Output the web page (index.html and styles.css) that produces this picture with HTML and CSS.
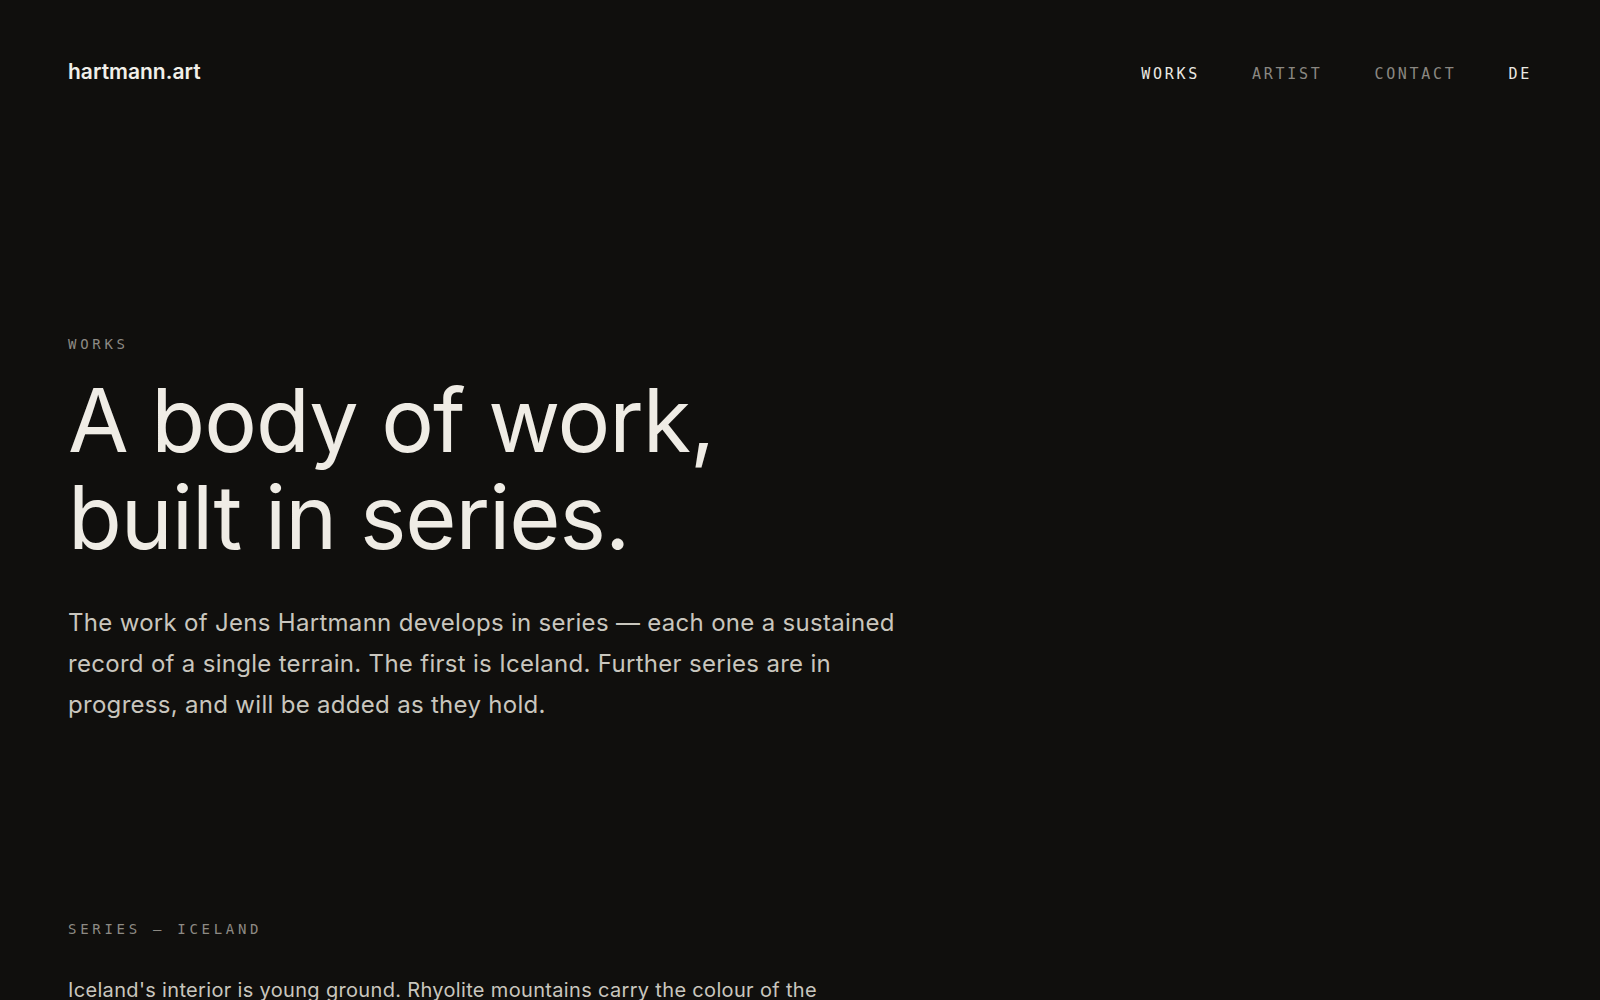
FILE: index.html
```html
<!DOCTYPE html>
<html lang="en">
<head>
<meta charset="utf-8">
<title>Works — hartmann.art</title>
<link rel="stylesheet" href="styles.css">
</head>
<body>
<header class="site-header">
  <a class="logo" href="#">hartmann.art</a>
  <nav class="nav">
    <a class="nav-link is-active" href="#">WORKS</a>
    <a class="nav-link" href="#">ARTIST</a>
    <a class="nav-link" href="#">CONTACT</a>
    <a class="nav-link is-lang" href="#">DE</a>
  </nav>
</header>
<main>
  <section class="hero">
    <p class="eyebrow">WORKS</p>
    <h1 class="hero-title">A body of work,<br>built in series.</h1>
    <p class="hero-lead">The work of Jens Hartmann develops in series — each one a sustained record of a single terrain. The first is Iceland. Further series are in progress, and will be added as they hold.</p>
  </section>
  <section class="series">
    <p class="eyebrow">SERIES — ICELAND</p>
    <p class="series-text">Iceland's interior is young ground. Rhyolite mountains carry the colour of the oxidised minerals in them, lava fields lie where they cooled, and the light changes the land by the hour.</p>
  </section>
</main>
</body>
</html>
```
FILE: styles.css
```css
html, body {
  margin: 0;
  padding: 0;
}
body {
  background: #100f0d;
  color: #eeebe4;
  font-family: Inter, "Noto Sans", sans-serif;
  overflow: hidden;
}
a {
  color: inherit;
  text-decoration: none;
}
.site-header {
  display: flex;
  justify-content: space-between;
  align-items: center;
  height: 142px;
  padding: 0 68px;
}
.logo {
  font-family: Inter, sans-serif;
  font-weight: 600;
  font-size: 21px;
  letter-spacing: 0;
  color: #f1efe9;
}
.nav {
  display: flex;
  gap: 52px;
  padding-top: 6px;
}
.nav-link {
  font-family: "DejaVu Sans Mono", "Liberation Mono", monospace;
  font-size: 15px;
  letter-spacing: 0.18em;
  color: #8a8781;
}
.nav-link.is-active,
.nav-link.is-lang {
  color: #ebe9e3;
}
main {
  padding: 0 68px;
}
.eyebrow {
  margin: 0;
  font-family: "DejaVu Sans Mono", "Liberation Mono", monospace;
  font-size: 14px;
  line-height: 20px;
  letter-spacing: 0.265em;
  color: #8d8a84;
}
.hero {
  padding-top: 192px;
}
.hero-title {
  margin: 18px 0 0;
  font-family: Inter, sans-serif;
  font-weight: 400;
  font-size: 88px;
  line-height: 1.1;
  letter-spacing: -0.012em;
  color: #efece5;
}
.hero-lead {
  margin: 36px 0 0;
  max-width: 850px;
  font-family: Inter, sans-serif;
  font-size: 24px;
  line-height: 41px;
  letter-spacing: 0.3px;
  color: #c9c6be;
}
.series {
  padding-top: 194px;
}
.series-text {
  margin: 34px 0 0;
  max-width: 790px;
  font-family: Inter, sans-serif;
  font-size: 20px;
  line-height: 34px;
  letter-spacing: 0.33px;
  color: #c9c6be;
}
```
